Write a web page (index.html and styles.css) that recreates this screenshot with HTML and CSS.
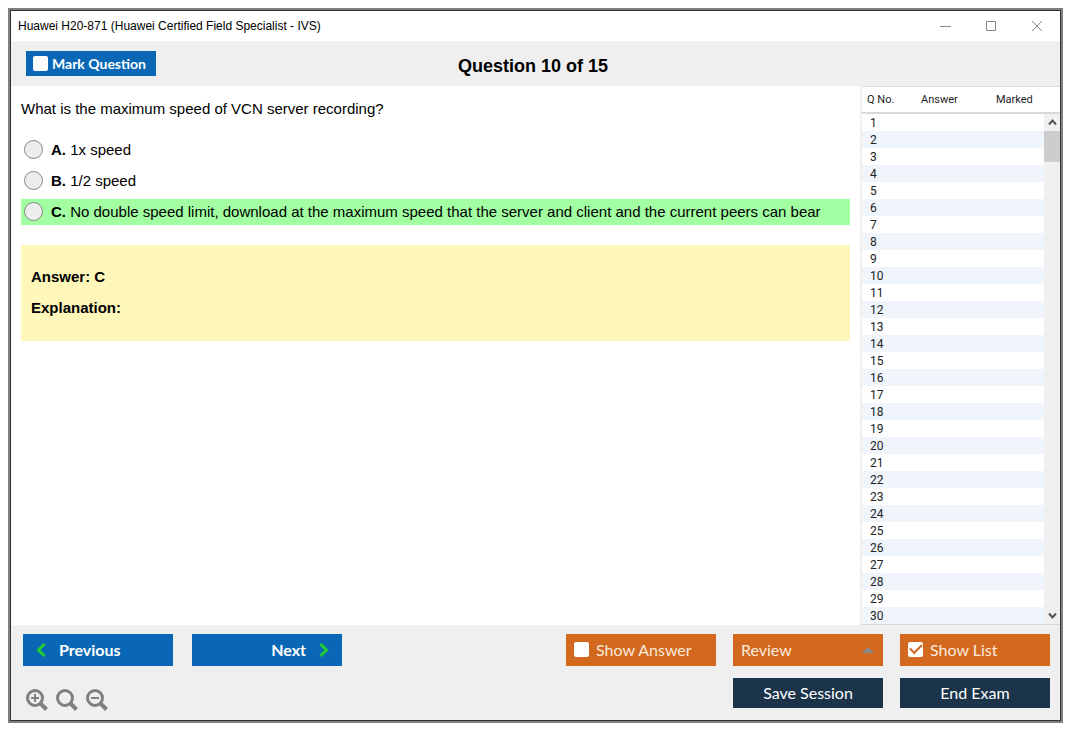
FILE: index.html
```html
<!DOCTYPE html>
<html lang="en">
<head>
  <meta charset="UTF-8" />
  <meta name="viewport" content="width=device-width, initial-scale=1.0"/>
  <title>Huawei H20-871 (Huawei Certified Field Specialist - IVS)</title>
  <link rel="stylesheet" href="styles.css">
</head>
<body>
  <div class="window">
    <div class="titlebar">
      <span>Huawei H20-871 (Huawei Certified Field Specialist - IVS)</span>
      <div class="window-buttons">
        <button aria-label="Minimize"><svg width="12" height="12" viewBox="0 0 12 12"><path d="M1 6.5h11"/></svg></button>
        <button aria-label="Maximize"><svg width="12" height="12" viewBox="0 0 12 12"><path d="M1.5 1.5h9v9h-9z"/></svg></button>
        <button aria-label="Close"><svg width="12" height="12" viewBox="0 0 12 12"><path d="M1 1l10 10M11 1L1 11"/></svg></button>
      </div>
    </div>

    <div class="header">
      <label class="mark-button"><input type="checkbox" class="check"> Mark Question</label>
      <h1>Question 10 of 15</h1>
    </div>

    <div class="main">
      <div class="question">
        <p class="question-text">What is the maximum speed of VCN server recording?</p>
        <div class="options">
          <label class="option"><input type="radio" name="option"><span><strong>A.</strong> 1x speed</span></label>
          <label class="option"><input type="radio" name="option"><span><strong>B.</strong> 1/2 speed</span></label>
          <label class="option correct"><input type="radio" name="option"><span><strong>C.</strong> No double speed limit, download at the maximum speed that the server and client and the current peers can bear</span></label>
        </div>
        <div class="answer">
          <p>Answer: C</p>
          <p>Explanation:</p>
        </div>
      </div>

      <div class="list">
        <table>
          <thead>
            <tr>
              <th class="col-number">Q No.</th>
              <th class="col-answer">Answer</th>
              <th>Marked</th>
            </tr>
          </thead>
          <tbody id="question-list">
            <!-- Rows will be injected here -->
          </tbody>
        </table>
        <div class="scroll">
          <div class="scroll-head"></div>
          <div class="scrollbar">
            <button aria-label="Scroll up"><svg width="9" height="9" viewBox="0 0 9 9"><path d="M1 6.5l3.5-4 3.5 4"/></svg></button>
            <div class="scroll-thumb"></div>
            <button class="scroll-down" aria-label="Scroll down"><svg width="9" height="9" viewBox="0 0 9 9"><path d="M1 2.5l3.5 4 3.5-4"/></svg></button>
          </div>
        </div>
      </div>
    </div>

    <div class="footer">
      <div class="footer-left">
        <div class="nav-buttons">
          <button class="nav-button"><svg width="10" height="16" viewBox="0 0 10 16"><path d="M8.500 2L2.500 8l6 6"/></svg> Previous</button>
          <button class="nav-button next">Next <svg width="10" height="16" viewBox="0 0 10 16"><path d="M1.500 2l6 6-6 6"/></svg></button>
        </div>
        <div class="zoom-buttons">
          <button aria-label="Zoom in"><svg width="22" height="22" viewBox="0 0 22 22"><circle cx="9" cy="9" r="7.500"/><path class="handle" d="M14.500 14.500l6 6"/><path class="thin" d="M5 9h8M9 5v8"/></svg></button>
          <button aria-label="Reset zoom"><svg width="22" height="22" viewBox="0 0 22 22"><circle cx="9" cy="9" r="7.500"/><path class="handle" d="M14.500 14.500l6 6"/></svg></button>
          <button aria-label="Zoom out"><svg width="22" height="22" viewBox="0 0 22 22"><circle cx="9" cy="9" r="7.500"/><path class="handle" d="M14.500 14.500l6 6"/><path class="thin" d="M5 9h8"/></svg></button>
        </div>
      </div>
      <div class="footer-right">
        <label class="orange-button"><input type="checkbox" class="check"> Show Answer</label>
        <div class="review">
          <select class="orange-button" aria-label="Review">
            <option>Review</option>
          </select>
          <svg width="12" height="6" viewBox="0 0 12 6"><path d="M6 0l6 6H0z"/></svg>
        </div>
        <label class="orange-button"><input type="checkbox" class="check" checked> Show List</label>
        <button class="dark-button save">Save Session</button>
        <button class="dark-button">End Exam</button>
      </div>
    </div>
  </div>

  <script>
    const tbody = document.getElementById("question-list");
    for (let i = 1; i <= 30; i++) {
      const row = document.createElement("tr");
      row.innerHTML = `<td>${i}</td><td></td><td></td>`;
      tbody.appendChild(row);
    }
  </script>
</body>
</html>
```

FILE: styles.css
```css
* {
  box-sizing: border-box;
}

body {
  font-family: "Liberation Sans", Arial, sans-serif;
  font-size: 15px;
  line-height: 17px;
  color: #000;
  background-color: #fff;
  margin: 0;
  padding: 8px 12px 12px 8px;
  min-height: 100vh;
  display: flex;
}

p, h1 {
  margin: 0;
}

button, select {
  font: inherit;
  border: none;
  padding: 0;
  background: none;
  cursor: pointer;
}

svg {
  display: block;
  fill: none;
}

.window {
  flex: 1;
  display: flex;
  flex-direction: column;
  border: 1px solid #333;
  outline: 2px solid #808080;
  margin: 2px;
}

.titlebar {
  height: 30px;
  padding: 0 17px 0 7px;
  display: flex;
  justify-content: space-between;
  align-items: center;
  font-size: 12px;
}

.window-buttons {
  display: flex;
  gap: 34px;
}

.window-buttons svg {
  stroke: #888;
}

.header {
  height: 45px;
  padding: 0 20px 0 15px;
  background-color: #efefef;
  display: grid;
  grid-template-columns: 1fr auto 1fr;
  align-items: center;
}

.header h1 {
  font-size: 18px;
  line-height: 20px;
  padding-top: 4px;
}

.mark-button {
  width: 130px;
  height: 25px;
  padding-left: 7px;
  display: flex;
  align-items: center;
  gap: 4px;
  background-color: #0967b5;
  color: #fff;
  font-family: Lato, Calibri, sans-serif;
  font-size: 14px;
  font-weight: bold;
}

.check {
  appearance: none;
  width: 15px;
  height: 15px;
  margin: 0;
  border-radius: 2px;
  background-color: #fff;
  display: grid;
  place-items: center;
}

.check:checked::before {
  content: "";
  width: 10px;
  height: 5px;
  margin-bottom: 3px;
  border-left: 2px solid #d2691e;
  border-bottom: 2px solid #d2691e;
  transform: rotate(-45deg);
}

/* Question and answers */
.main {
  flex: 1;
  display: flex;
}

.question {
  flex: 1;
  padding: 14px 10px;
}

.options {
  margin: 20px 0;
  display: flex;
  flex-direction: column;
  gap: 5px;
}

.option {
  min-height: 26px;
  padding: 0 0 2px 3px;
  display: flex;
  align-items: center;
  gap: 8px;
}

.option input {
  appearance: none;
  width: 19px;
  height: 19px;
  margin: 0;
  border: 1px solid #888;
  border-radius: 50%;
  background-color: #ededed;
}

.option input:checked {
  background-color: #0967b5;
}

.correct {
  background-color: #a2ffa2;
}

.answer {
  padding: 23px 10px 25px;
  background-color: #fef7b9;
  font-weight: bold;
  display: flex;
  flex-direction: column;
  gap: 14px;
}

/* Question list */
.list {
  width: 200px;
  display: flex;
  align-items: stretch;
  border-left: 2px solid #efefef;
  border-bottom: 1px solid #d9d9d9;
  font-family: Roboto, Arial, sans-serif;
  font-size: 12px;
  color: #222;
}

.list table {
  flex: 1;
  table-layout: fixed;
  border-spacing: 0;
  align-self: flex-start;
}

.list th {
  height: 28px;
  padding: 0 0 0 5px;
  border-top: 1px solid #d9d9d9;
  border-bottom: 2px solid #d9d9d9;
  font-size: 11px;
  font-weight: normal;
  text-align: left;
}

.col-number {
  width: 54px;
}

.col-answer {
  width: 75px;
}

.list td {
  height: 17px;
  line-height: 15px;
  padding: 2px 0 0 8px;
}

.list tbody tr:nth-child(even) {
  background-color: #eff5fa;
}

.scroll {
  width: 16px;
  display: flex;
  flex-direction: column;
}

.scroll-head {
  height: 28px;
  border-top: 1px solid #d9d9d9;
  border-bottom: 2px solid #d9d9d9;
}

.scrollbar {
  flex: 1;
  display: flex;
  flex-direction: column;
  background-color: #f0f0f0;
}

.scrollbar button {
  height: 17px;
  display: grid;
  place-items: center;
}

.scrollbar svg {
  stroke: #555;
  stroke-width: 2;
}

.scroll-thumb {
  height: 31px;
  background-color: #cdcdcd;
}

.scroll-down {
  margin-top: auto;
}

/* Footer */
.footer {
  padding: 9px 10px 9px 12px;
  background-color: #efefef;
  display: flex;
  justify-content: space-between;
  font-family: Lato, Calibri, sans-serif;
  font-size: 16px;
}

.footer-left {
  display: flex;
  flex-direction: column;
  gap: 23px;
}

.nav-buttons {
  display: flex;
  gap: 19px;
}

.nav-button {
  width: 150px;
  height: 32px;
  padding: 0 13px 1px;
  display: flex;
  align-items: center;
  gap: 13px;
  background-color: #0967b5;
  color: #fff;
  font-weight: bold;
}

.nav-button svg {
  stroke: #2c3;
  stroke-width: 3;
}

.next {
  justify-content: flex-end;
}

.zoom-buttons {
  display: flex;
  gap: 8px;
  padding-left: 3px;
}

.zoom-buttons svg {
  stroke: #808080;
  stroke-width: 3;
}

.zoom-buttons .handle {
  stroke-width: 4;
}

.zoom-buttons .thin {
  stroke-width: 2;
}

.footer-right {
  display: grid;
  grid-template-columns: repeat(3, 150px);
  grid-template-rows: 32px 30px;
  gap: 12px 17px;
}

.orange-button {
  width: 100%;
  height: 32px;
  padding: 0 8px 2px;
  display: flex;
  align-items: center;
  gap: 7px;
  background-color: #d2691e;
  color: #fbe9dd;
}

.review {
  display: grid;
  align-items: center;
}

.review select, .review svg {
  grid-area: 1 / 1;
}

.review select {
  appearance: none;
}

.review svg {
  justify-self: end;
  margin-right: 9px;
  fill: #888;
  pointer-events: none;
}

.dark-button {
  padding-bottom: 2px;
  background-color: #1b344a;
  color: #fff;
}

.save {
  grid-column: 2;
}
```
